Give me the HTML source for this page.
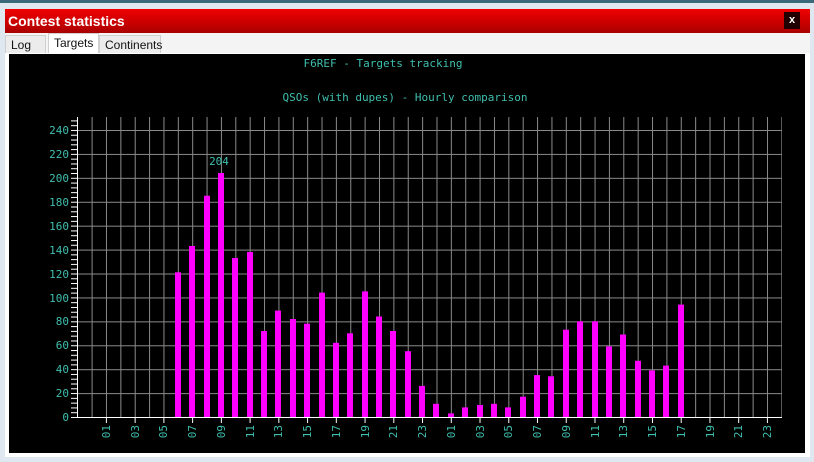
<!DOCTYPE html>
<html><head><meta charset="utf-8"><style>
*{margin:0;padding:0;box-sizing:border-box}
body{width:814px;height:462px;overflow:hidden;background:#dfe7f0;font-family:"Liberation Sans",sans-serif;position:relative}
.top{position:absolute;left:0;top:0;width:814px;height:3px;background:#3a6a7a}
.title{position:absolute;left:5px;top:9px;width:805px;height:24px;background:linear-gradient(#f00000,#c80000 60%,#a80000);color:#fff;font-weight:bold;font-size:14px;line-height:24px;padding-left:3px}
.close{position:absolute;right:10px;top:3px;width:16px;height:17px;background:#200000;color:#fff;font-size:11px;line-height:16px;text-align:center}
.tabs{position:absolute;left:5px;top:33px;width:805px;height:21px;background:#f4f4f4;border-bottom:1px solid #ddd}
.tab{position:absolute;top:2px;height:19px;font-size:12px;line-height:19px;padding:0 5px;background:#ececec;border:1px solid #d0d0d0;border-bottom:none;color:#111}
.tab.sel{top:0;height:21px;background:#fff;line-height:18px}
.panel{position:absolute;left:5px;top:53px;width:805px;height:404px;background:#fff}
svg{position:absolute;left:9px;top:54px}
</style></head><body>
<div class="top"></div>
<div class="title">Contest statistics<div class="close">x</div></div>
<div class="tabs">
<div class="tab" style="left:0;width:41px">Log</div>
<div class="tab sel" style="left:43px;width:51px">Targets</div>
<div class="tab" style="left:94px;width:62px">Continents</div>
</div>
<div class="panel"></div>
<svg width="796" height="399" viewBox="9 54 796 399">
<defs>
<pattern id="vg" x="91.6" y="0" width="14.37" height="10" patternUnits="userSpaceOnUse"><rect x="0" y="0" width="1" height="10" fill="#8a8a8a"/></pattern>
<pattern id="hg" x="0" y="130.0" width="10" height="23.92" patternUnits="userSpaceOnUse"><rect x="0" y="0" width="10" height="1" fill="#8a8a8a"/></pattern>
<pattern id="mt" x="0" y="417" width="10" height="4.784" patternUnits="userSpaceOnUse"><rect x="0" y="0" width="10" height="1" fill="#fff"/></pattern>
<pattern id="bt" x="105.9" y="0" width="28.74" height="10" patternUnits="userSpaceOnUse"><rect x="0" y="0" width="1" height="10" fill="#fff"/></pattern>
</defs>
<rect x="9" y="54" width="796" height="399" fill="#000"/>
<rect x="91" y="117" width="691" height="300" fill="url(#vg)"/>
<rect x="77" y="130" width="705" height="280" fill="url(#hg)"/>
<rect x="71" y="118" width="6" height="300" fill="url(#mt)"/>
<rect x="77" y="117" width="1" height="301" fill="#fff"/>
<rect x="77" y="417" width="705" height="1" fill="#fff"/>
<rect x="105" y="417" width="670" height="6" fill="url(#bt)"/>
<g fill="#ff00ff">
<rect x="175" y="272.3" width="6" height="144.7"/><rect x="189" y="246" width="6" height="171"/><rect x="204" y="195.7" width="6" height="221.3"/><rect x="218" y="173" width="6" height="244"/><rect x="232" y="258" width="6" height="159"/><rect x="247" y="252" width="6" height="165"/><rect x="261" y="331" width="6" height="86"/><rect x="275" y="310.6" width="6" height="106.4"/><rect x="290" y="319" width="6" height="98"/><rect x="304" y="323.7" width="6" height="93.3"/><rect x="319" y="292.6" width="6" height="124.4"/><rect x="333" y="342.8" width="6" height="74.2"/><rect x="347" y="333.3" width="6" height="83.7"/><rect x="362" y="291.4" width="6" height="125.6"/><rect x="376" y="316.5" width="6" height="100.5"/><rect x="390" y="331" width="6" height="86"/><rect x="405" y="351.2" width="6" height="65.8"/><rect x="419" y="385.9" width="6" height="31.1"/><rect x="433" y="403.8" width="6" height="13.2"/><rect x="448" y="413.4" width="6" height="3.6"/><rect x="462" y="407.4" width="6" height="9.6"/><rect x="477" y="405" width="6" height="12"/><rect x="491" y="403.8" width="6" height="13.2"/><rect x="505" y="407.4" width="6" height="9.6"/><rect x="520" y="396.7" width="6" height="20.3"/><rect x="534" y="375.1" width="6" height="41.9"/><rect x="548" y="376.3" width="6" height="40.7"/><rect x="563" y="329.7" width="6" height="87.3"/><rect x="577" y="321.3" width="6" height="95.7"/><rect x="592" y="321.3" width="6" height="95.7"/><rect x="606" y="346.4" width="6" height="70.6"/><rect x="620" y="334.5" width="6" height="82.5"/><rect x="635" y="360.8" width="6" height="56.2"/><rect x="649" y="370.4" width="6" height="46.6"/><rect x="663" y="365.6" width="6" height="51.4"/><rect x="678" y="304.6" width="6" height="112.4"/>
</g>
<g font-family="'DejaVu Sans Mono','Liberation Mono',monospace" font-size="11" fill="#3fbfae">
<text x="383" y="67" text-anchor="middle">F6REF - Targets tracking</text>
<text x="405" y="101" text-anchor="middle">QSOs (with dupes) - Hourly comparison</text>
<text x="219" y="165" text-anchor="middle">204</text>
<g text-anchor="end">
<text x="69" y="421">0</text><text x="69" y="397">20</text><text x="69" y="373">40</text><text x="69" y="349">60</text><text x="69" y="325">80</text><text x="69" y="302">100</text><text x="69" y="278">120</text><text x="69" y="254">140</text><text x="69" y="230">160</text><text x="69" y="206">180</text><text x="69" y="182">200</text><text x="69" y="158">220</text><text x="69" y="134">240</text>
</g>
<g text-anchor="end">
<text transform="translate(110,425) rotate(-90)">01</text>
<text transform="translate(139,425) rotate(-90)">03</text>
<text transform="translate(167,425) rotate(-90)">05</text>
<text transform="translate(196,425) rotate(-90)">07</text>
<text transform="translate(225,425) rotate(-90)">09</text>
<text transform="translate(254,425) rotate(-90)">11</text>
<text transform="translate(282,425) rotate(-90)">13</text>
<text transform="translate(311,425) rotate(-90)">15</text>
<text transform="translate(340,425) rotate(-90)">17</text>
<text transform="translate(369,425) rotate(-90)">19</text>
<text transform="translate(397,425) rotate(-90)">21</text>
<text transform="translate(426,425) rotate(-90)">23</text>
<text transform="translate(455,425) rotate(-90)">01</text>
<text transform="translate(484,425) rotate(-90)">03</text>
<text transform="translate(512,425) rotate(-90)">05</text>
<text transform="translate(541,425) rotate(-90)">07</text>
<text transform="translate(570,425) rotate(-90)">09</text>
<text transform="translate(599,425) rotate(-90)">11</text>
<text transform="translate(627,425) rotate(-90)">13</text>
<text transform="translate(656,425) rotate(-90)">15</text>
<text transform="translate(685,425) rotate(-90)">17</text>
<text transform="translate(714,425) rotate(-90)">19</text>
<text transform="translate(742,425) rotate(-90)">21</text>
<text transform="translate(771,425) rotate(-90)">23</text>
</g>
</g>
</svg>
</body></html>
